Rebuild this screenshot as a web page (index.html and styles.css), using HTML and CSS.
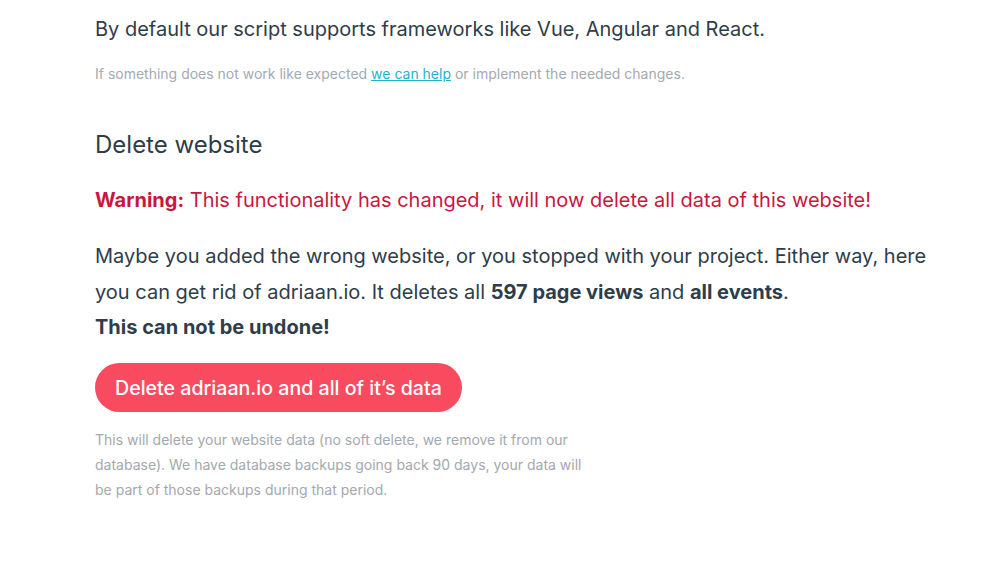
FILE: index.html
```html
<!DOCTYPE html>
<html>
<head>
<meta charset="utf-8">
<link rel="stylesheet" href="styles.css">
</head>
<body>
<main class="page">
  <p class="lead">By default our script supports frameworks like Vue, Angular and React.</p>
  <p class="hint">If something does not work like expected <a href="#" class="link">we can help</a> or implement the needed changes.</p>

  <h2 class="title">Delete website</h2>
  <p class="warning"><strong>Warning:</strong> This functionality has changed, it will now delete all data of this website!</p>
  <p class="body">Maybe you added the wrong website, or you stopped with your project. Either way, here you can get rid of adriaan.io. It deletes all <strong>597 page views</strong> and <strong>all events</strong>.</p>
  <p class="undone">This can not be undone!</p>
  <button class="danger">Delete adriaan.io and all of it’s data</button>
  <p class="note">This will delete your website data (no soft delete, we remove it from our database). We have database backups going back 90 days, your data will be part of those backups during that period.</p>
</main>
</body>
</html>
```

FILE: styles.css
```css
html, body {
  margin: 0;
  padding: 0;
  background: #ffffff;
}
body {
  font-family: Inter, "Noto Sans", sans-serif;
  color: #2e3d48;
}
.page {
  padding: 14px 0 0 95px;
  width: 840px;
}
p { margin: 0; }
.lead {
  font-size: 20px;
  line-height: 30px;
  color: #2e3d48;
}
.hint {
  margin-top: 20px;
  font-size: 14px;
  line-height: 20px;
  color: #a3aab1;
}
.link {
  color: #1fb3c7;
  text-decoration: underline;
}
.title {
  margin: 45px 0 0;
  font-size: 24px;
  font-weight: 400;
  line-height: 32px;
  color: #2e3d48;
}
.warning {
  margin-top: 24px;
  font-size: 20px;
  line-height: 30px;
  color: #c8173f;
}
.warning strong { font-weight: 700; }
.body {
  margin-top: 23px;
  font-size: 20px;
  line-height: 36px;
  color: #2e3d48;
}
.body strong, .undone { font-weight: 700; }
.undone {
  font-size: 20px;
  line-height: 34px;
}
.danger {
  margin-top: 19px;
  display: inline-block;
  border: none;
  background: #f84b60;
  color: #fff;
  font-family: inherit;
  font-size: 19.6px;
  font-weight: 500;
  height: 49px;
  padding: 0 20px;
  border-radius: 25px;
}
.note {
  margin-top: 15px;
  width: 490px;
  font-size: 14px;
  line-height: 25px;
  color: #a3a8ae;
}
```
